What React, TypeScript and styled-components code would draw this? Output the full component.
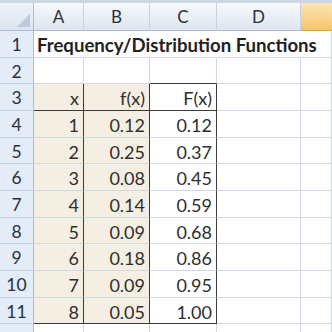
import React from "react";
import styled, { createGlobalStyle, css } from "styled-components";

const GlobalStyle = createGlobalStyle`
  html, body { margin: 0; padding: 0; background: #ffffff; }
  body { overflow: hidden; }
`;

const GRID = "#d0d7e5";
const DARK = "#3a3a3a";
const BEIGE = "#f5efe3";
const FONT = `Lato, "Open Sans", "Liberation Sans", sans-serif`;

const Sheet = styled.div`
  width: 332px;
  height: 332px;
  overflow: hidden;
  background: #ffffff;
  font-family: ${FONT};
`;

const TopBand = styled.div`
  height: 3px;
  background: #cdd7e4;
`;

const Grid = styled.div`
  display: grid;
  grid-template-columns: 34px 50px 66px 67px 84px 1fr;
  grid-template-rows: 28px 27px 26px 27px 27px 26px 27px 27px 26px 27px 27px 26px 20px;
`;

const Corner = styled.div`
  position: relative;
  box-sizing: border-box;
  background: linear-gradient(#eef3f9, #dbe4ef);
  border-right: 1px solid #a9bcd3;
  border-bottom: 1px solid #a9bcd3;
  &::after {
    content: "";
    position: absolute;
    right: 3px;
    bottom: 3px;
    width: 0;
    height: 0;
    border-left: 13px solid transparent;
    border-bottom: 13px solid #bccbdc;
  }
`;

const ColHeader = styled.div<{ $active?: boolean }>`
  box-sizing: border-box;
  display: flex;
  align-items: center;
  justify-content: center;
  font-size: 17px;
  color: #27313f;
  background: linear-gradient(#f7f9fc, #dde5ef);
  border-right: 1px solid #c7d3e3;
  border-bottom: 1px solid #a9bcd3;
  ${(p) =>
    p.$active &&
    css`
      background: linear-gradient(#fbe6b4, #f5c46c);
      border-right: none;
      border-bottom: 1px solid #d9a640;
    `}
`;

const RowHeader = styled.div`
  box-sizing: border-box;
  display: flex;
  align-items: center;
  justify-content: center;
  padding-top: 1px;
  font-size: 17.5px;
  color: #27313f;
  background: #e4ecf7;
  border-right: 1px solid #a9bcd3;
  border-bottom: 1px solid #c5d3e5;
`;

const Cell = styled.div<{
  $bg?: string;
  $right?: "none" | "dark";
  $bottom?: "dark";
  $bold?: boolean;
  $overflow?: boolean;
}>`
  box-sizing: border-box;
  display: flex;
  align-items: center;
  justify-content: flex-end;
  padding: 2px 4px 0 2px;
  font-size: 18px;
  color: #2e2e2e;
  white-space: nowrap;
  background: ${(p) => p.$bg ?? "transparent"};
  border-right: 1px solid
    ${(p) => (p.$right === "dark" ? DARK : p.$right === "none" ? "transparent" : GRID)};
  border-bottom: 1px solid ${(p) => (p.$bottom === "dark" ? DARK : GRID)};
  ${(p) =>
    p.$overflow &&
    css`
      justify-content: flex-start;
      overflow: visible;
      position: relative;
      z-index: 1;
      padding-left: 3px;
    `}
  ${(p) =>
    p.$bold &&
    css`
      font-weight: 700;
      color: #222222;
      font-size: 18.6px;
    `}
`;

const x = [1, 2, 3, 4, 5, 6, 7, 8];
const f = ["0.12", "0.25", "0.08", "0.14", "0.09", "0.18", "0.09", "0.05"];
const F = ["0.12", "0.37", "0.45", "0.59", "0.68", "0.86", "0.95", "1.00"];

export default function App() {
  return (
    <>
      <GlobalStyle />
      <Sheet>
        <TopBand />
        <Grid>
          <Corner />
          <ColHeader>A</ColHeader>
          <ColHeader>B</ColHeader>
          <ColHeader>C</ColHeader>
          <ColHeader>D</ColHeader>
          <ColHeader $active />

          <RowHeader>1</RowHeader>
          <Cell $overflow $bold $right="none">
            Frequency/Distribution Functions
          </Cell>
          <Cell $right="none" />
          <Cell $right="none" />
          <Cell $right="none" />
          <Cell />

          <RowHeader>2</RowHeader>
          <Cell />
          <Cell />
          <Cell $bottom="dark" />
          <Cell />
          <Cell />

          <RowHeader>3</RowHeader>
          <Cell $bg={BEIGE} $right="dark" $bottom="dark">x</Cell>
          <Cell $bg={BEIGE} $right="dark" $bottom="dark">f(x)</Cell>
          <Cell $right="dark" $bottom="dark">F(x)</Cell>
          <Cell />
          <Cell />

          {x.map((v, i) => {
            const last = i === x.length - 1;
            return (
              <React.Fragment key={v}>
                <RowHeader>{i + 4}</RowHeader>
                <Cell $bg={BEIGE} $right="dark" $bottom={last ? "dark" : undefined}>
                  {v}
                </Cell>
                <Cell $bg={BEIGE} $right="dark" $bottom={last ? "dark" : undefined}>
                  {f[i]}
                </Cell>
                <Cell $right="dark" $bottom={last ? "dark" : undefined}>
                  {F[i]}
                </Cell>
                <Cell />
                <Cell />
              </React.Fragment>
            );
          })}

          <RowHeader />
          <Cell />
          <Cell />
          <Cell />
          <Cell />
          <Cell />
        </Grid>
      </Sheet>
    </>
  );
}
